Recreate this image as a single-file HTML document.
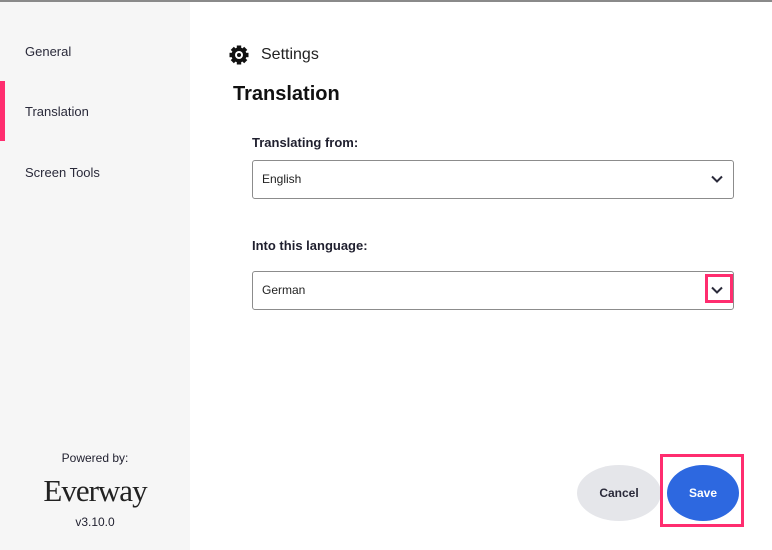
<!DOCTYPE html>
<html><head><style>
*{margin:0;padding:0;box-sizing:border-box}
body{width:772px;height:550px;background:#fff;font-family:"Liberation Sans",sans-serif;position:relative;overflow:hidden;color:#1f1f2e}
.top{position:absolute;left:0;top:0;width:772px;height:2px;background:#8a8a8a}
.side{position:absolute;left:0;top:2px;width:190px;height:548px;background:#f6f6f6}
.nav{position:absolute;left:25px;font-size:13px;color:#2a2a3a}
.bar{position:absolute;left:0;top:81px;width:5px;height:60px;background:#ff2d6f}
.sel{position:absolute;left:252px;width:482px;height:39px;border:1px solid #8c8c8c;border-radius:3px;font-size:12px;padding-left:9px;line-height:37px;color:#222}
.lbl{position:absolute;left:252px;font-size:13px;font-weight:bold;color:#1f1f2e}
.chev{position:absolute;right:10px;top:14px}
</style></head><body>
<div class="top"></div>
<div class="side">
<div class="bar" style="top:79px"></div>
<div class="nav" style="top:42px">General</div>
<div class="nav" style="top:102px">Translation</div>
<div class="nav" style="top:163px">Screen Tools</div>
<div style="position:absolute;left:0;width:190px;top:449px;text-align:center;font-size:12px">Powered by:</div>
<div style="position:absolute;left:0;width:190px;top:471px;text-align:center;font-family:'Liberation Serif',serif;font-size:31px;color:#222;letter-spacing:-1px">Everway</div>
<div style="position:absolute;left:0;width:190px;top:513px;text-align:center;font-size:12px">v3.10.0</div>
</div>
<svg style="position:absolute;left:229px;top:45px" width="20" height="20" viewBox="0 0 20 20"><g fill="#111"><circle cx="10" cy="10" r="7.5"/><rect x="7.8" y="0.5" width="4.4" height="19"/><rect x="0.5" y="7.8" width="19" height="4.4"/><rect x="7.8" y="0.5" width="4.4" height="19" transform="rotate(45 10 10)"/><rect x="7.8" y="0.5" width="4.4" height="19" transform="rotate(-45 10 10)"/></g><circle cx="10" cy="10" r="4" fill="#fff"/><circle cx="10" cy="10" r="2" fill="#111"/></svg>
<div style="position:absolute;left:261px;top:46px;font-size:16px;color:#222">Settings</div>
<div style="position:absolute;left:233px;top:83px;font-size:20px;font-weight:bold;color:#111">Translation</div>
<div class="lbl" style="top:135px">Translating from:</div>
<div class="sel" style="top:160px">English<svg class="chev" width="12" height="8" viewBox="0 0 12 8"><path d="M1 1.5l5 5 5-5" fill="none" stroke="#2a2a3a" stroke-width="2"/></svg></div>
<div class="lbl" style="top:238px">Into this language:</div>
<div class="sel" style="top:271px">German<svg class="chev" width="12" height="8" viewBox="0 0 12 8"><path d="M1 1.5l5 5 5-5" fill="none" stroke="#2a2a3a" stroke-width="2"/></svg></div>
<div style="position:absolute;left:705px;top:274px;width:28px;height:29px;border:3px solid #ff2d6f"></div>
<div style="position:absolute;left:577px;top:465px;width:84px;height:56px;border-radius:50%;background:#e5e6ea;font-size:12px;font-weight:bold;text-align:center;line-height:56px;color:#2a2a3a">Cancel</div>
<div style="position:absolute;left:660px;top:454px;width:84px;height:73px;border:3px solid #ff2d6f"></div>
<div style="position:absolute;left:667px;top:465px;width:72px;height:56px;border-radius:50%;background:#2d68e0;font-size:12px;font-weight:bold;text-align:center;line-height:56px;color:#fff">Save</div>
</body></html>
